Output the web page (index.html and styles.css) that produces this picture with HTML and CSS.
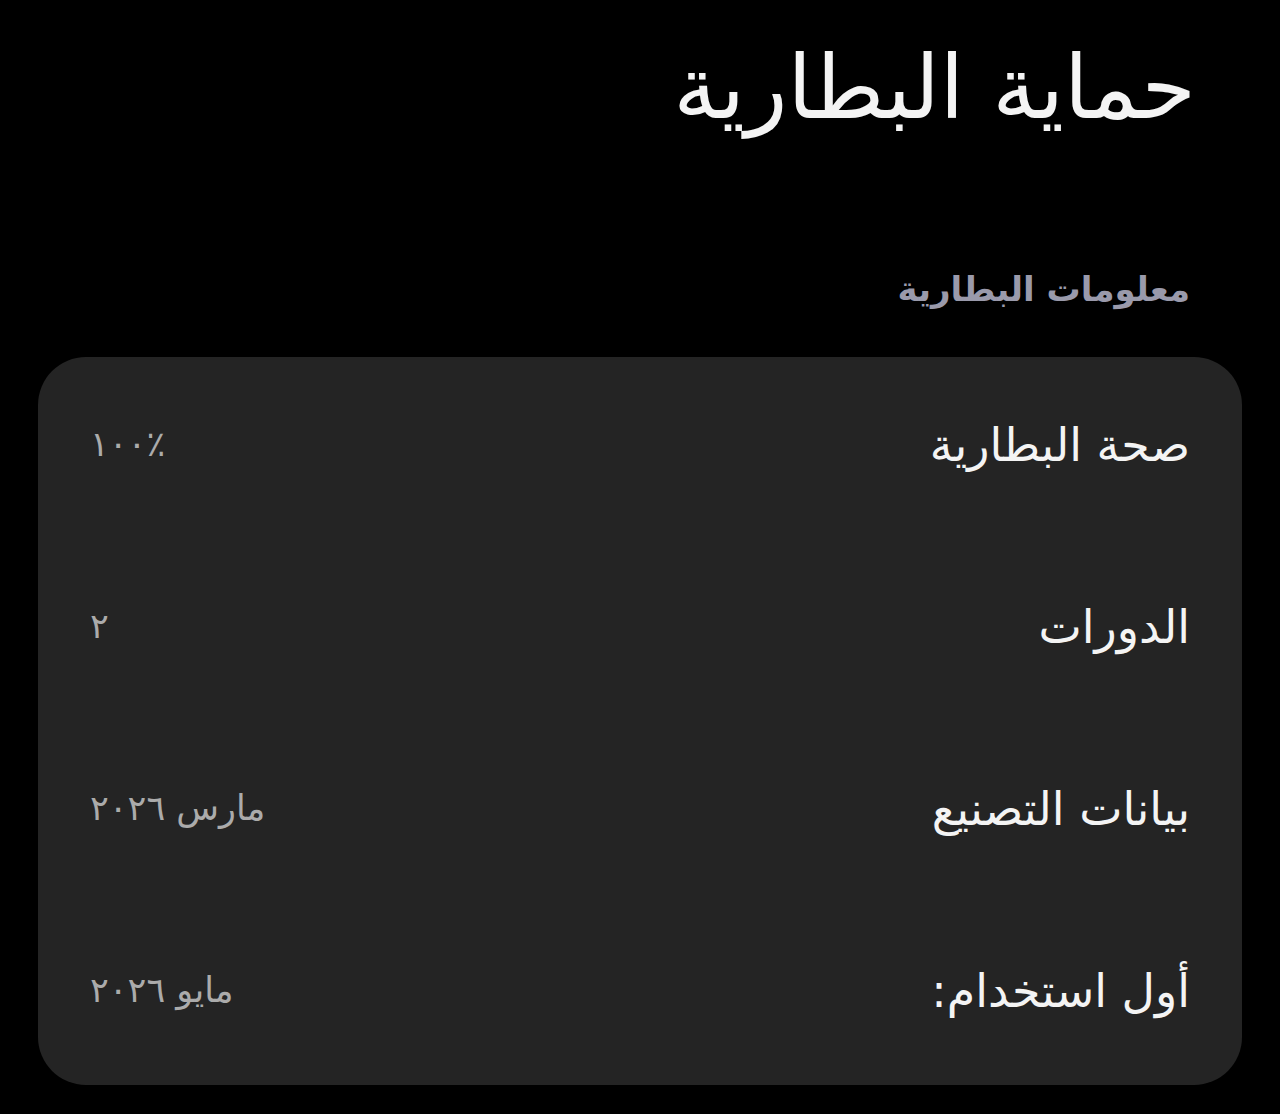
FILE: index.html
```html
<!DOCTYPE html>
<html lang="ar" dir="rtl">
<head>
  <meta charset="UTF-8" />
  <meta name="viewport" content="width=device-width, initial-scale=1.0" />
  <title>حماية البطارية</title>
  <link rel="stylesheet" href="styles.css">
</head>
<body>
  <!-- Header -->
  <div class="page-header">
    <h1>حماية البطارية</h1>
  </div>

  <!-- Battery info -->
  <div class="section-label">معلومات البطارية</div>
  <div class="info-card">
    <div class="info-row">
      <span class="info-name">صحة البطارية</span>
      <span class="info-value ltr">١٠٠٪</span>
    </div>
    <div class="info-row">
      <span class="info-name">الدورات</span>
      <span class="info-value">٢</span>
    </div>
    <div class="info-row">
      <span class="info-name">بيانات التصنيع</span>
      <span class="info-value">مارس ٢٠٢٦</span>
    </div>
    <div class="info-row">
      <span class="info-name">أول استخدام:</span>
      <span class="info-value">مايو ٢٠٢٦</span>
    </div>
  </div>
</body>
</html>
```

FILE: styles.css
```css
body, html {
  margin: 0;
  padding: 0;
  background-color: #000;
  color: #f4f4f4;
  font-family: "DejaVu Sans", sans-serif;
}

body {
  padding: 0 38px;
}

/* Big title */
.page-header {
  height: 180px;
  display: flex;
  align-items: center;
  padding-right: 46px;
}

.page-header h1 {
  margin: 0;
  margin-top: -4px;
  font-size: 88px;
  font-weight: normal;
  line-height: 1;
}

/* Section label */
.section-label {
  height: 177px;
  display: flex;
  align-items: center;
  padding-right: 52px;
  font-size: 34px;
  font-weight: bold;
  color: #9a9aab;
  box-sizing: border-box;
  padding-top: 40px;
}

/* Card */
.info-card {
  background-color: #242424;
  border-radius: 48px;
  display: flex;
  flex-direction: column;
}

.info-row {
  height: 182px;
  display: flex;
  justify-content: space-between;
  align-items: center;
  padding: 0 52px;
}

.info-name {
  font-size: 46px;
  color: #f4f4f4;
  margin-top: -6px;
}

.info-value {
  font-size: 35px;
  color: #ababab;
  margin-top: -8px;
}

.info-value.ltr {
  direction: ltr;
  unicode-bidi: isolate;
}
```
